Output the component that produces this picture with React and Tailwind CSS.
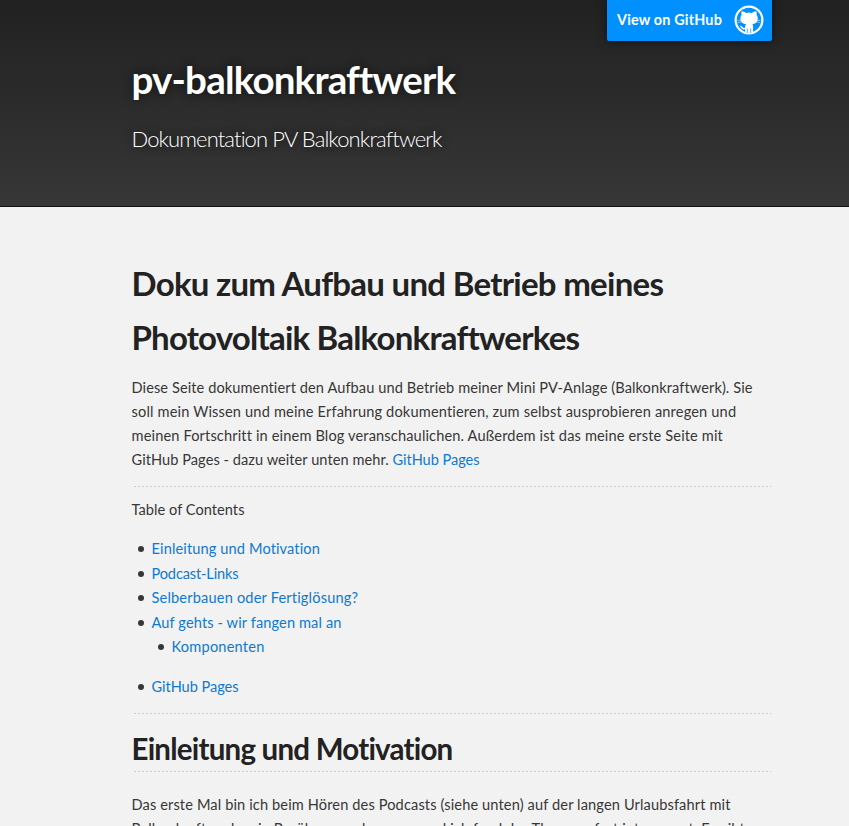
import { useLayoutEffect, useRef } from "react";

// Renders one line of text, tracked so that it spans the given width.
function Line({ w, children, className = "" }) {
  const ref = useRef(null);
  useLayoutEffect(() => {
    const el = ref.current;
    el.style.letterSpacing = "0px";
    const natural = el.getBoundingClientRect().width;
    el.style.letterSpacing = `${(w - natural) / children.length}px`;
  }, [w, children]);
  return (
    <span ref={ref} className={`inline-block whitespace-pre ${className}`}>
      {children}
    </span>
  );
}

const Rule = ({ className = "" }) => (
  <div className={`mr-[1px] ml-[2.5px] h-px bg-[repeating-linear-gradient(90deg,#cbcbcb_0px,#cbcbcb_2px,transparent_2px,transparent_4px)] ${className}`} />
);

function Item({ w, children, nested }) {
  return (
    <li className={`flex h-[24.5px] items-center ${nested ? "pl-[26px]" : "pl-[6px]"}`}>
      <span className="mr-[8px] size-[6px] rounded-full bg-[#373737]" />
      <a href="#" className="text-[#0f79d0]"><Line w={w}>{children}</Line></a>
    </li>
  );
}

function Octocat() {
  return (
    <svg viewBox="0 0 30 30" className="mb-[2px] size-[30px]" fill="none">
      <circle cx="15" cy="15" r="13.4" stroke="#fff" strokeWidth="2.2" />
      <path fill="#fff" d="M7.7 6.2c1.7.1 3.2.9 4.300 1.700a15 15 0 0 1 6 0c1.100-.8 2.600-1.600 4.300-1.700.6 1.400.5 2.700.2 3.600 1 1.200 1.400 2.500 1.200 4.200-.3 3.400-2.300 4.700-5.400 5.200.7.700.8 1.500.8 2.600v5.800c-2.500 1-5.600 1-8.100 0v-3.300c-2.300.4-3.400-.4-4-1.800-.4-.8-.8-1.300-1.500-1.700 1.700-.5 2.500.500 3.100 1.300.7.900 1.500 1 2.500.7.1-1.500.2-2.700 1-3.600-3.300-.5-5.400-1.900-5.600-5.300-.1-1.700.3-3 1.200-4.100-.4-.9-.5-2.200 0-3.600Z" />
      <path stroke="#fff" strokeWidth=".5" d="M3.500 15.500 8 15M3.700 17.700 8.500 16.500M26.500 15.500 22 15M26.300 17.700 21.500 16.500" />
      <path stroke="#0090ff" strokeWidth=".7" d="M13.300 23.500v4.600M16.700 23.500v4.600" />
    </svg>
  );
}

export default function App() {
  return (
    <div className="h-[826px] overflow-hidden bg-[#f2f2f2] font-['Lato',sans-serif] text-[14.6px] leading-[24px] text-[#373737]">
      <header className="h-[207px] border-b border-[#111] bg-linear-to-b from-[#212121] to-[#373737] pr-[77px] pl-[131.5px] text-white">
        <div className="flex h-[41px] justify-end">
          <a href="#" className="flex h-[41px] w-[165px] items-center justify-between rounded-b-[2px] bg-[#0090ff] pr-[8px] pl-[10px] text-[14.4px] font-bold shadow-[0_0_10px_rgba(0,0,0,0.5)]">
            <Line w={105} className="mb-[2px]">View on GitHub</Line>
            <Octocat />
          </a>
        </div>
        <h1 className="mt-[8px] h-[60px] text-[38.5px] leading-[60px] font-bold [text-shadow:0_0_10px_#111]">
          <Line w={323}>pv-balkonkraftwerk</Line>
        </h1>
        <h2 className="mt-[14px] text-[22px] leading-[32px] font-light [text-shadow:0_0_10px_#111]">
          <Line w={310}>Dokumentation PV Balkonkraftwerk</Line>
        </h2>
      </header>

      <main className="mr-[77px] ml-[131.5px] flex flex-col">
        <h1 className="mt-[49px] flex flex-col items-start text-[33px] leading-[54px] font-bold text-[#222]">
          <Line w={532}>Doku zum Aufbau und Betrieb meines</Line>
          <Line w={447}>Photovoltaik Balkonkraftwerkes</Line>
        </h1>
        <p className="mt-[12px] flex flex-col items-start">
          <Line w={621}>Diese Seite dokumentiert den Aufbau und Betrieb meiner Mini PV-Anlage (Balkonkraftwerk). Sie</Line>
          <Line w={605}>soll mein Wissen und meine Erfahrung dokumentieren, zum selbst ausprobieren anregen und</Line>
          <Line w={591}>meinen Fortschritt in einem Blog veranschaulichen. Außerdem ist das meine erste Seite mit</Line>
          <span className="flex">
            <Line w={261}>GitHub Pages - dazu weiter unten mehr. </Line>
            <a href="#" className="text-[#0f79d0]"><Line w={87}>GitHub Pages</Line></a>
          </span>
        </p>
        <Rule className="mt-[14px]" />
        <p className="mt-[11px]"><Line w={113}>Table of Contents</Line></p>
        <ul className="mt-[15px]">
          <Item w={169}>Einleitung und Motivation</Item>
          <Item w={87}>Podcast-Links</Item>
          <Item w={207}>Selberbauen oder Fertiglösung?</Item>
          <Item w={190}>Auf gehts - wir fangen mal an</Item>
          <Item w={93} nested>Komponenten</Item>
        </ul>
        <ul className="mt-[15px]">
          <Item w={87}>GitHub Pages</Item>
        </ul>
        <Rule className="mt-[14px]" />
        <h2 className="mt-[11px] h-[46px] text-[29.5px] leading-[48px] font-bold text-[#222]">
          <Line w={322}>Einleitung und Motivation</Line>
        </h2>
        <Rule />
        <p className="mt-[21px] flex flex-col items-start">
          <Line w={599}>Das erste Mal bin ich beim Hören des Podcasts (siehe unten) auf der langen Urlaubsfahrt mit</Line>
          <Line w={613}>Balkonkraftwerken in Berührung gekommen und ich fand das Thema sofort interessant. Es gibt</Line>
        </p>
      </main>
    </div>
  );
}
